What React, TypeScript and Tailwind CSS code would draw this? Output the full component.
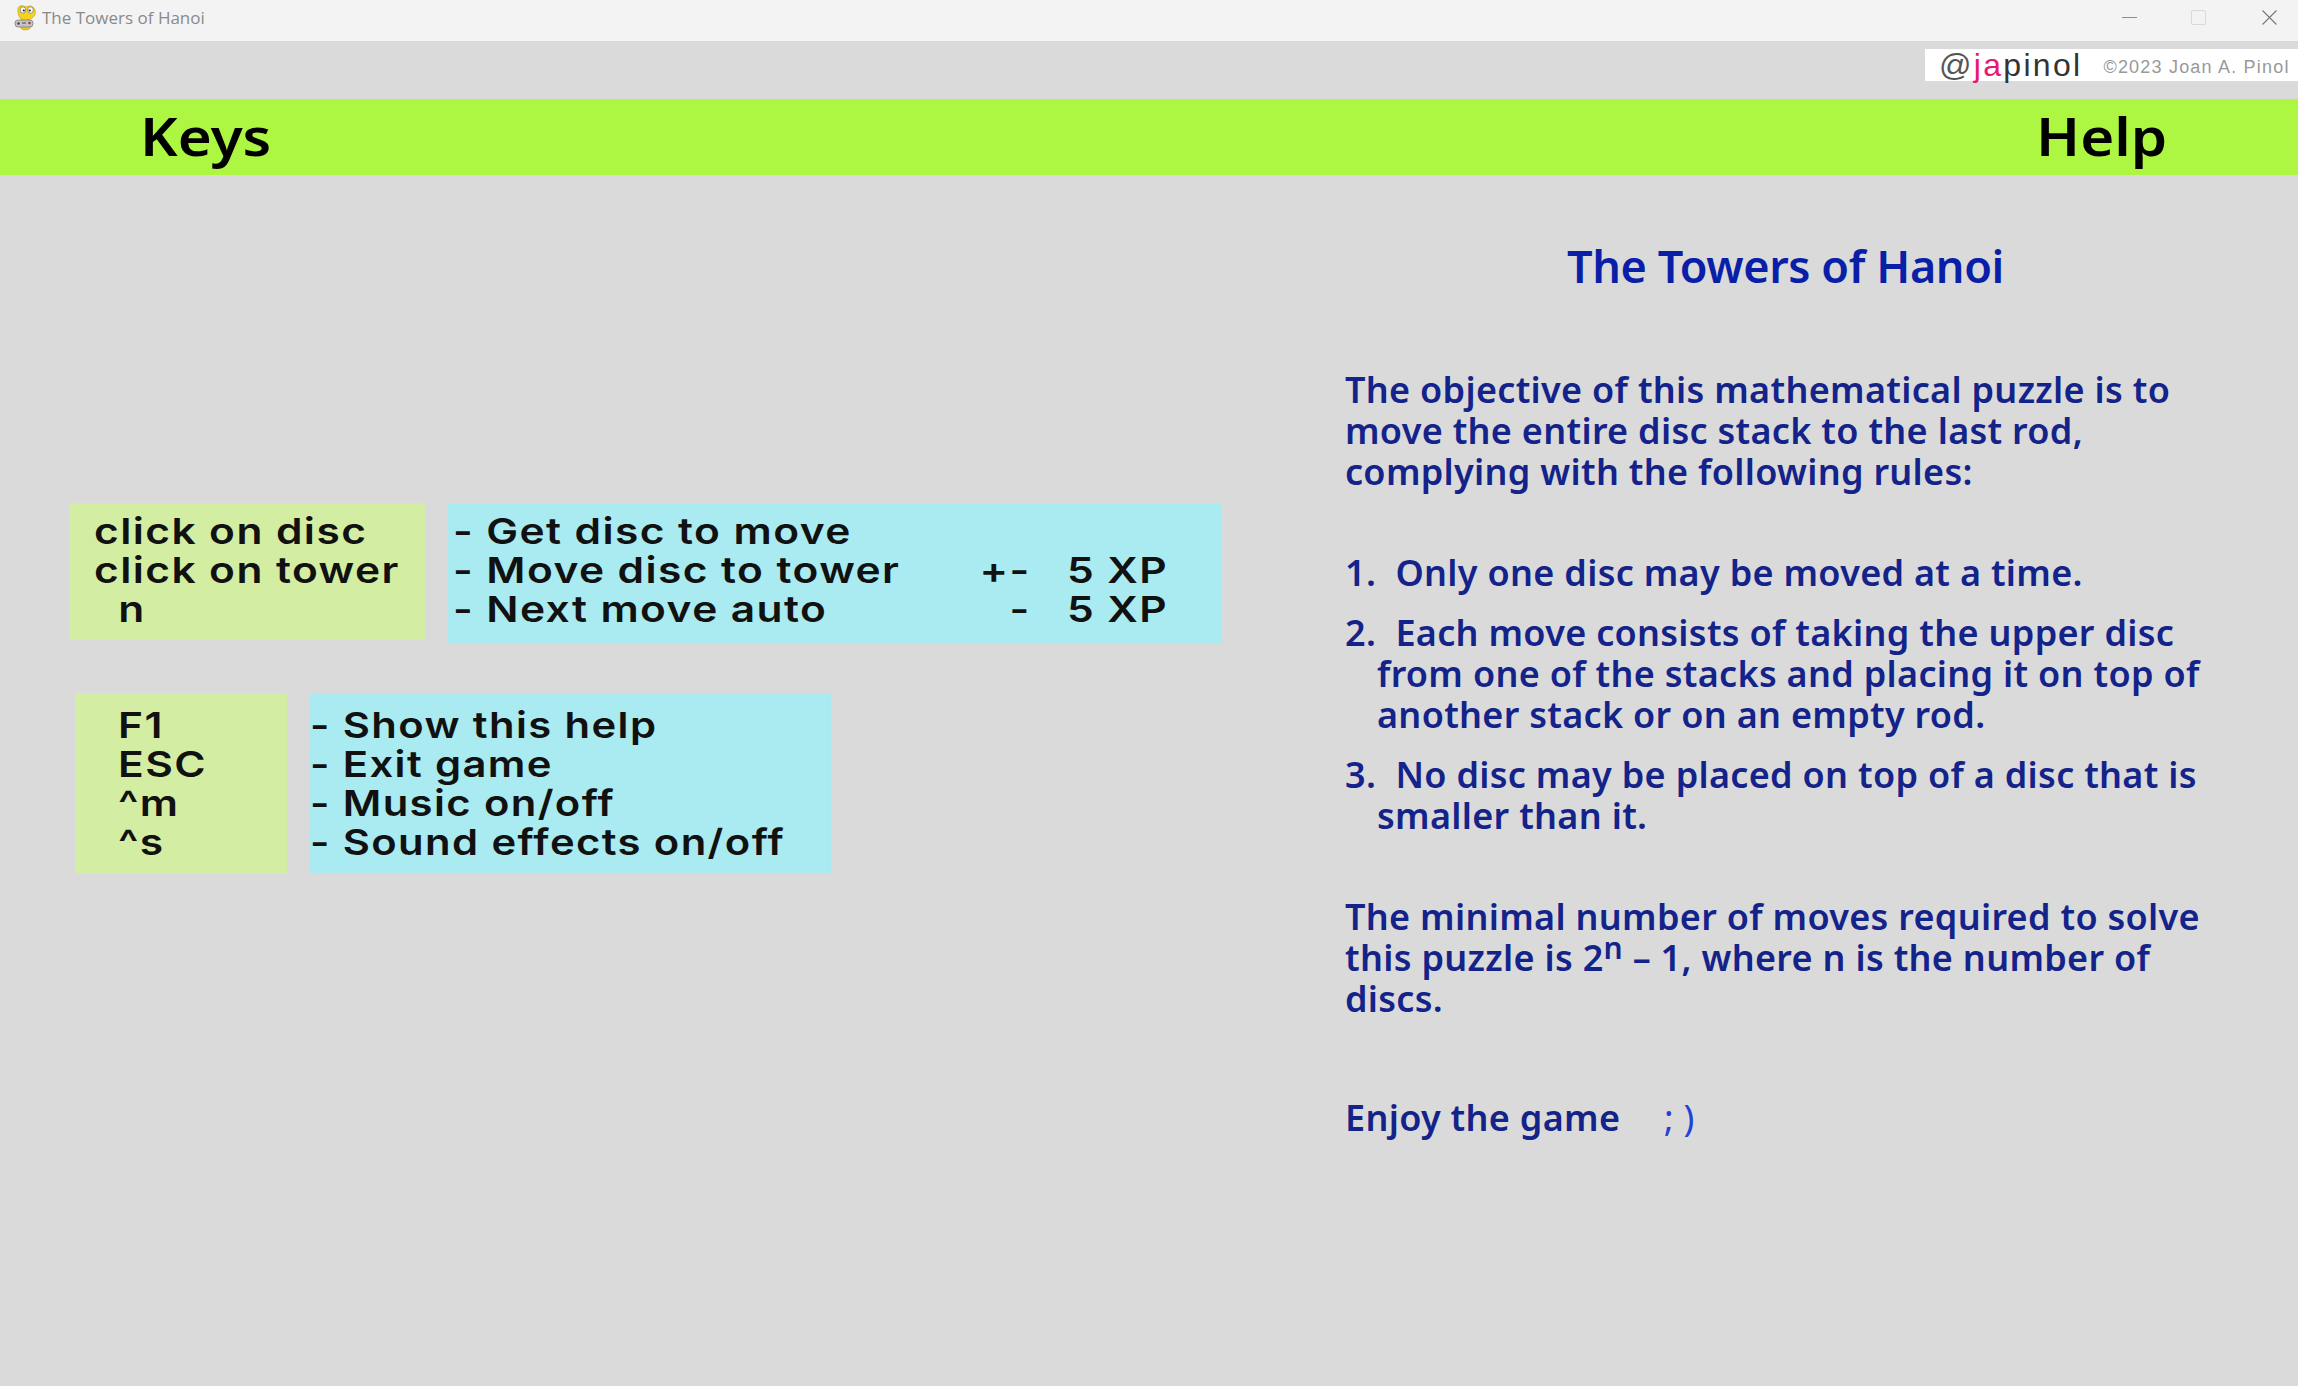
const titleFont = { fontFamily: '"Noto Sans", sans-serif' };

const keyRows = ['click on disc', 'click on tower', '  n'];
const moveRows: [string, string][] = [
  ['- Get disc to move', ''],
  ['- Move disc to tower', '+-   5 XP'],
  ['- Next move auto', '-   5 XP'],
];
const shortcutKeys = ['F1', 'ESC', '^m', '^s'];
const shortcutRows = ['- Show this help', '- Exit game', '- Music on/off', '- Sound effects on/off'];

const PygameIcon = () => (
  <svg viewBox="0 0 24 26" className="w-[24px] h-[26px]">
    <path d="M5 6c-1-4 2-6 5-5 2 0 3 1 4 1 2-2 7-1 8 3 1 3 0 6-3 8-3 3-8 3-11 1-2-2-3-5-3-8z" fill="#f7d21c" stroke="#b89a12" strokeWidth="0.6" />
    <path d="M7 20h11c0 3-2 5-5 5h-2c-2 0-4-2-4-5z" fill="#f0c818" stroke="#b89a12" strokeWidth="0.5" />
    <ellipse cx="10" cy="5" rx="2.8" ry="3.2" fill="#fff" stroke="#555" strokeWidth="0.6" />
    <ellipse cx="17.5" cy="5" rx="2.8" ry="3.2" fill="#fff" stroke="#555" strokeWidth="0.6" />
    <circle cx="10.8" cy="5.5" r="1.1" fill="#222" />
    <circle cx="16.8" cy="5.5" r="1.1" fill="#222" />
    <rect x="2" y="15" width="18" height="7" rx="3" fill="#c4c4c4" stroke="#666" strokeWidth="0.6" />
    <circle cx="5.5" cy="18.5" r="1.2" fill="#444" />
    <circle cx="16.5" cy="18" r="1.3" fill="#b53a3a" />
    <rect x="9" y="17" width="4" height="2" fill="#888" />
  </svg>
);

const TitleBar = () => (
  <div className="h-[41px] bg-[#f3f3f3] flex items-center pb-[6px]">
    <div className="ml-[13px] w-[24px] flex items-center justify-center">
      <PygameIcon />
    </div>
    <span className="ml-[5px] text-[17px] text-[#8a8a8a]" style={{ fontFamily: '"Open Sans", sans-serif' }}>
      The Towers of Hanoi
    </span>
    <div className="ml-auto flex items-center">
      <div className="w-[15px] h-px bg-[#8c8c8c] mr-[54px]" />
      <div className="w-[15px] h-[15px] rounded-[2px] border border-[#d9d9d9] mr-[56px]" />
      <svg viewBox="0 0 15 15" className="w-[15px] h-[15px] mr-[21px]">
        <path d="M0.5 0.5 L14.5 14.5 M14.5 0.5 L0.5 14.5" stroke="#777" strokeWidth="1.1" fill="none" />
      </svg>
    </div>
  </div>
);

const LogoStrip = () => (
  <div className="h-[58px] flex justify-end pt-[8px]">
    <div
      className="h-[32px] w-[373px] bg-white flex items-center pl-[14px] whitespace-nowrap"
      style={{ fontFamily: '"Liberation Sans", Arial, sans-serif' }}
    >
      <span className="text-[32px] leading-none tracking-[2.3px] text-[#555]">
        @<span className="text-[#e8186f]">ja</span>
        <span className="text-[#333]">pinol</span>
      </span>
      <span className="ml-[21px] text-[18px] leading-none tracking-[1.2px] text-[#999] mt-[4px]">©2023 Joan A. Pinol</span>
    </div>
  </div>
);

const HeaderBar = () => (
  <div
    className="h-[76px] bg-[#adf743] flex items-center justify-between pl-[140px] pr-[131px] pb-[2px] text-[53px] font-semibold text-black"
    style={titleFont}
  >
    <span className="origin-left scale-x-[1.1]">Keys</span>
    <span className="origin-right scale-x-[1.1]">Help</span>
  </div>
);

const KeysPanel = () => (
  <div
    className="w-[1300px] shrink-0 pt-[328px] text-[36px] leading-[39px] font-semibold text-[#111] whitespace-pre tracking-[1.2px]"
    style={{ fontFamily: '"Inter", sans-serif' }}
  >
    <div className="flex items-start">
      <div className="ml-[69px] w-[356px] h-[137px] bg-[#d3eea3] pl-[25px] pt-[9px]">
        <div className="origin-left scale-x-[1.18]">
          {keyRows.map((row) => (
            <div key={row}>{row}</div>
          ))}
        </div>
      </div>
      <div className="ml-[23px] mt-px w-[774px] h-[140px] bg-[#a9ebf0] pl-[5px] pt-[8px]">
        <div className="origin-left scale-x-[1.18] w-[606px]">
          {moveRows.map(([label, xp]) => (
            <div key={label} className="flex justify-between">
              <span>{label}</span>
              <span>{xp}</span>
            </div>
          ))}
        </div>
      </div>
    </div>
    <div className="flex items-start mt-[49px]">
      <div className="ml-[75px] w-[212px] h-[181px] bg-[#d3eea3] pl-[43px] pt-[13px]">
        <div className="origin-left scale-x-[1.18]">
          {shortcutKeys.map((row) => (
            <div key={row}>{row}</div>
          ))}
        </div>
      </div>
      <div className="ml-[22px] w-[522px] h-[181px] bg-[#a9ebf0] pl-[1px] pt-[13px]">
        <div className="origin-left scale-x-[1.16]">
          {shortcutRows.map((row) => (
            <div key={row}>{row}</div>
          ))}
        </div>
      </div>
    </div>
  </div>
);

const HelpPanel = () => (
  <div
    className="flex-1 pl-[45px] pt-[66px] text-[36px] leading-[41px] font-semibold tracking-[0.3px] text-[#14238a] whitespace-nowrap"
    style={titleFont}
  >
    <h1 className="ml-[222px] text-[45px] leading-[50px] font-semibold tracking-[-0.4px] text-[#0a1fa8]">The Towers of Hanoi</h1>
    <div className="mt-[78px]">
      <p>The objective of this mathematical puzzle is to</p>
      <p>move the entire disc stack to the last rod,</p>
      <p>complying with the following rules:</p>
    </div>
    <p className="mt-[60px]">1.&nbsp; Only one disc may be moved at a time.</p>
    <div className="mt-[19px]">
      <p>2.&nbsp; Each move consists of taking the upper disc</p>
      <p className="pl-[32px]">from one of the stacks and placing it on top of</p>
      <p className="pl-[32px]">another stack or on an empty rod.</p>
    </div>
    <div className="mt-[19px]">
      <p>3.&nbsp; No disc may be placed on top of a disc that is</p>
      <p className="pl-[32px]">smaller than it.</p>
    </div>
    <div className="mt-[60px]">
      <p>The minimal number of moves required to solve</p>
      <p>
        this puzzle is 2<sup className="text-[30px] top-[-12px]">n</sup> – 1, where n is the number of
      </p>
      <p>discs.</p>
    </div>
    <p className="mt-[78px]">
      Enjoy the game <span className="ml-[34px] font-normal text-[#2340d8]">; )</span>
    </p>
  </div>
);

export default function App() {
  return (
    <div className="w-[2298px] h-[1386px] bg-[#dadada] overflow-hidden flex flex-col">
      <TitleBar />
      <LogoStrip />
      <HeaderBar />
      <div className="flex flex-1">
        <KeysPanel />
        <HelpPanel />
      </div>
    </div>
  );
}
